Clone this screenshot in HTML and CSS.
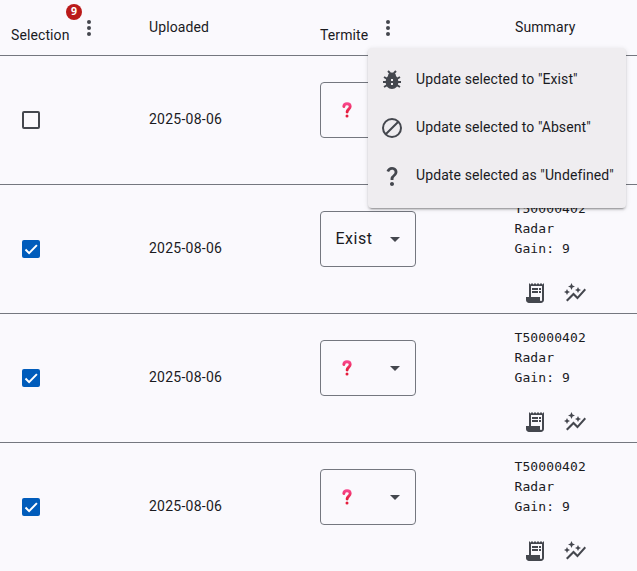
FILE: index.html
```html
<!DOCTYPE html>
<html lang="en">
<head>
<meta charset="utf-8">
<title>Uploads</title>
<link rel="stylesheet" href="styles.css">
</head>
<body>
<svg class="defs" aria-hidden="true">
  <linearGradient id="pink" x1="0" y1="0" x2="0" y2="1"><stop offset="0" stop-color="#f8458a"/><stop offset="1" stop-color="#e51c3c"/></linearGradient>
  <symbol id="more" viewBox="0 0 24 24"><circle cx="12" cy="6" r="2"/><circle cx="12" cy="12" r="2"/><circle cx="12" cy="18" r="2"/></symbol>
  <symbol id="receipt" viewBox="0 0 24 24"><path d="M19.5 3.5L18 2l-1.5 1.5L15 2l-1.5 1.5L12 2l-1.5 1.5L9 2 7.5 3.5 6 2v14H3v3c0 1.66 1.34 3 3 3h12c1.66 0 3-1.34 3-3V2l-1.5 1.5zM19 19c0 .55-.45 1-1 1s-1-.45-1-1v-3H8V5h11v14zM9 7h6v2H9zM16 7h2v2h-2zM9 10h6v2H9zM16 10h2v2h-2z"/></symbol>
  <symbol id="graph" viewBox="0 0 24 24"><path d="M14.06 9.94L12 9l2.06-.94L15 6l.94 2.06L18 9l-2.06.94L15 12l-.94-2.06zM4 14l.94-2.06L7 11l-2.06-.94L4 8l-.94 2.06L1 11l2.06.94L4 14zm4.5-5l1.09-2.41L12 5.5 9.59 4.41 8.5 2 7.41 4.41 5 5.5l2.41 1.09L8.5 9zm-4 11.5l6-6.01 4 4L23 8.93l-1.41-1.41-7.09 7.97-4-4L3 19l1.5 1.5z"/></symbol>
  <symbol id="question" viewBox="0 0 24 24"><path d="M11.07 12.85c.77-1.39 2.25-2.21 3.11-3.44.91-1.29.4-3.7-2.18-3.7-1.69 0-2.52 1.28-2.87 2.34L6.54 6.96C7.25 4.83 9.18 3 11.99 3c2.35 0 3.96 1.07 4.78 2.41.7 1.15 1.11 3.3.03 4.9-1.2 1.77-2.35 2.31-2.97 3.45-.25.46-.35.76-.35 2.24h-2.89c-.01-.78-.13-2.05.48-3.15zM14 20c0 1.1-.9 2-2 2s-2-.9-2-2 .9-2 2-2 2 .9 2 2z"/></symbol>
  <symbol id="mark" viewBox="0 0 10 16"><path d="M1.8 4.5C2 2.7 3.2 1.8 5 1.8c2 0 3.2 1 3.2 2.8 0 2.6-3.1 2.5-3.1 5.5" fill="none" stroke="url(#pink)" stroke-width="2.9" stroke-linecap="round"/><circle cx="5" cy="14" r="1.5" fill="#e51c3c"/></symbol>
</svg>

<div class="table">
  <div class="row head">
    <div class="cell title low"><span class="badged">Selection<span class="badge">9</span></span><svg class="icon more"><use href="#more"/></svg></div>
    <div class="cell title">Uploaded</div>
    <div class="cell title low"><span>Termite</span><svg class="icon more"><use href="#more"/></svg></div>
    <div class="cell title">Summary</div>
  </div>

  <div class="row">
    <div class="cell pick"><span class="box"></span></div>
    <div class="cell">2025-08-06</div>
    <div class="cell"><div class="select"><svg class="mark"><use href="#mark"/></svg><span class="arrow"></span></div></div>
    <div class="cell"></div>
  </div>

  <div class="row">
    <div class="cell pick"><span class="box checked"><svg viewBox="0 0 18 18"><path d="M3.5 9.5l3.6 3.6 7.8-8"/></svg></span></div>
    <div class="cell">2025-08-06</div>
    <div class="cell"><div class="select"><span>Exist</span><span class="arrow"></span></div></div>
    <div class="cell summary"><pre>T50000402
Radar
Gain: 9</pre><div class="actions"><svg class="icon"><use href="#receipt"/></svg><svg class="icon"><use href="#graph"/></svg></div></div>
  </div>

  <div class="row">
    <div class="cell pick"><span class="box checked"><svg viewBox="0 0 18 18"><path d="M3.5 9.5l3.6 3.6 7.8-8"/></svg></span></div>
    <div class="cell">2025-08-06</div>
    <div class="cell"><div class="select"><svg class="mark"><use href="#mark"/></svg><span class="arrow"></span></div></div>
    <div class="cell summary"><pre>T50000402
Radar
Gain: 9</pre><div class="actions"><svg class="icon"><use href="#receipt"/></svg><svg class="icon"><use href="#graph"/></svg></div></div>
  </div>

  <div class="row">
    <div class="cell pick"><span class="box checked"><svg viewBox="0 0 18 18"><path d="M3.5 9.5l3.6 3.6 7.8-8"/></svg></span></div>
    <div class="cell">2025-08-06</div>
    <div class="cell"><div class="select"><svg class="mark"><use href="#mark"/></svg><span class="arrow"></span></div></div>
    <div class="cell summary"><pre>T50000402
Radar
Gain: 9</pre><div class="actions"><svg class="icon"><use href="#receipt"/></svg><svg class="icon"><use href="#graph"/></svg></div></div>
  </div>
</div>

<div class="menu">
  <div class="item"><svg class="icon" viewBox="0 0 24 24"><path d="M8 3l2.200 2.200M16 3l-2.200 2.200M3 14h18M4 9l4 2.300M20 9l-4 2.300M4 19l4-2.300M20 19l-4-2.300" fill="none" stroke="currentColor" stroke-width="2"/><path fill-rule="evenodd" d="M8 8C8 5.500 9.700 4.500 12 4.500s4 1 4 3.500C17.500 9.400 18.300 11.400 18.300 14c0 4-2.500 7-6.300 7s-6.300-3-6.300-7c0-2.600.8-4.600 2.300-6zM11 11v6h2v-6z"/></svg><span>Update selected to "Exist"</span></div>
  <div class="item"><svg class="icon" viewBox="0 0 24 24"><path d="M12 3a9 9 0 1 0 0 18a9 9 0 1 0 0-18M5.700 18.300L18.300 5.700" fill="none" stroke="currentColor" stroke-width="2"/></svg><span>Update selected to "Absent"</span></div>
  <div class="item"><svg class="icon"><use href="#question"/></svg><span>Update selected as "Undefined"</span></div>
</div>
</body>
</html>
```

FILE: styles.css
```css
* { box-sizing: border-box; }
body {
  margin: 0;
  height: 571px;
  overflow: hidden;
  background: #faf9fd;
  color: #1a1b1f;
  font: 14px/20px Roboto, sans-serif;
  letter-spacing: .25px;
}
.defs { position: absolute; width: 0; height: 0; }
.icon { width: 24px; height: 24px; flex: none; fill: currentColor; color: #44474e; }
.row {
  display: grid;
  grid-template-columns: 138px 171px 195px 1fr;
  height: 129px;
  padding-left: 11px;
  border-bottom: 1px solid #74777f;
}
.head { height: 56px; }
.cell { display: flex; align-items: center; padding-bottom: 2px; }
.title { align-items: flex-start; padding-top: 17px; letter-spacing: .1px; }
.low { padding-top: 25px; }
.more { width: 24px; margin: -9px 0 0 7.5px; }
.badged { position: relative; }
.badge {
  position: absolute;
  left: 55px;
  top: -21px;
  width: 16px;
  height: 16px;
  border-radius: 50%;
  background: #ba1a1a;
  color: #fff;
  font: 700 10.5px/15px "Open Sans", sans-serif;
  text-align: center;
}
.pick { padding: 0 0 0 11px; }
.box { width: 18px; height: 18px; border: 2px solid #44474e; border-radius: 2px; }
.checked { border: 0; background: #005cbb; }
.box svg { display: block; width: 18px; height: 18px; fill: none; stroke: #fff; stroke-width: 2; }
.select {
  display: flex;
  align-items: center;
  justify-content: space-between;
  width: 96px;
  height: 56px;
  margin-top: -18px;
  padding: 0 15px 0 14.5px;
  border: 1px solid #74777f;
  border-radius: 4px;
  font-size: 16px;
  letter-spacing: .5px;
}
.arrow { border: 5px solid transparent; border-top-color: #44474e; border-bottom: 0; margin-top: 1px; }
.mark { width: 10px; height: 16px; margin-left: 6px; }
.summary { flex-direction: column; align-items: flex-start; padding: 14px 0 0; }
pre { margin: 0 0 0 -.5px; font: 13px/20px "DejaVu Sans Mono", monospace; letter-spacing: .1px; }
.actions { display: flex; gap: 16px; margin: 22px 0 0 7.5px; }
.menu {
  position: absolute;
  left: 368px;
  top: 48px;
  width: 258px;
  height: 160px;
  padding: 8px 0;
  border-radius: 4px;
  background: #efedf0;
  box-shadow: 0 3px 1px -2px rgba(0,0,0,.2), 0 2px 2px rgba(0,0,0,.14), 0 1px 5px rgba(0,0,0,.12);
}
.item { display: flex; align-items: center; gap: 12px; height: 48px; padding: 0 12px; white-space: nowrap; letter-spacing: .1px; }
.item span { margin-top: -2px; }
```
